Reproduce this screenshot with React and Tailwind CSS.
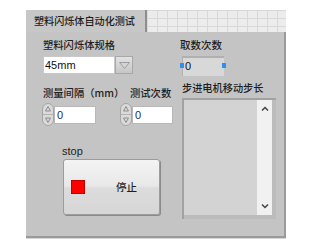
import React from "react";

const cjk = { fontFamily: '"Noto Sans CJK SC", "Noto Sans", sans-serif' };
const latin = { fontFamily: '"Liberation Sans", Arial, sans-serif' };

const Spinner = () => (
  <svg width="12" height="23" viewBox="0 0 12 23">
    <rect x="0.5" y="0.5" width="11" height="22" rx="5.5" fill="#dadada" stroke="#a4a4a4" />
    <line x1="1" y1="11.5" x2="11" y2="11.5" stroke="#b4b4b4" />
    <path d="M3.5 8 L6 3.5 L8.5 8 Z" fill="none" stroke="#8c8c8c" />
    <path d="M3.5 15 L6 19.5 L8.5 15 Z" fill="none" stroke="#8c8c8c" />
  </svg>
);

const Numeric = ({ width }) => (
  <div className="flex items-center">
    <Spinner />
    <div
      className={`${width} h-[18px] bg-white border border-[#b8b8b8] text-[11px] leading-[16px] pl-[2px] text-[#1c2b5a]`}
      style={latin}
    >
      0
    </div>
  </div>
);

export default function App() {
  return (
    <div className="w-[316px] h-[249px] bg-white pt-[10px] pl-[26px] text-[#1e1e1e]" style={cjk}>
      <div className="w-[260px]">
        <div className="flex h-[22px]">
          <div className="w-[121px] bg-[#c7c7c7] border-r-[2px] border-[#8e8e8e] pl-[8px] text-[10.1px] leading-[22px] whitespace-nowrap font-medium">
            塑料闪烁体自动化测试
          </div>
          <div className="flex-1 bg-[#ececec] bg-[linear-gradient(to_right,#d8d8d8_1px,transparent_1px),linear-gradient(to_bottom,#d8d8d8_1px,transparent_1px)] bg-[size:10px_8px]"></div>
        </div>
        <div className="h-[206px] bg-[#c4c4c4] border-r-[2px] border-b-[2px] border-[#9a9a9a] flex pl-[17px] font-medium">
          <div className="w-[137px] flex flex-col">
            <div className="mt-[6px] text-[10.3px] leading-[14px]">塑料闪烁体规格</div>
            <div className="mt-[4px] flex h-[18px] w-[90px]">
              <div className="flex-1 bg-white border border-[#c8c8c8] text-[11px] leading-[16px] pl-[1px] text-[#111] font-normal" style={latin}>
                45mm
              </div>
              <div className="w-[18px] bg-gradient-to-b from-[#e2e2e2] to-[#c6c6c6] border border-[#a8a8a8] flex items-center justify-center">
                <svg width="11" height="7" viewBox="0 0 11 7">
                  <path d="M0.5 0.5 L10.5 0.5 L5.5 6.5 Z" fill="#d4d4d4" stroke="#9e9e9e" />
                </svg>
              </div>
            </div>
            <div className="mt-[12px] flex text-[10.3px] leading-[14px] whitespace-nowrap">
              <div className="w-[87px]">测量间隔（mm）</div>
              <div>测试次数</div>
            </div>
            <div className="mt-[3px] flex font-normal">
              <div className="w-[78px] -ml-[1px]">
                <Numeric width="w-[42px]" />
              </div>
              <Numeric width="w-[41px]" />
            </div>
            <div className="mt-[18px] ml-[19px] text-[11px] leading-[14px] text-[#1e1e1e] font-normal" style={latin}>
              stop
            </div>
            <div className="mt-[1px] ml-[20px] w-[97px] h-[56px] rounded-[3px] border border-[#9c9c9c] shadow-[1px_1px_0_#8a8a8a] bg-[linear-gradient(to_bottom,#f4f4f4_0%,#e8e8e8_48%,#dcdcdc_52%,#d6d6d6_100%)] flex items-center pl-[7px]">
              <div className="w-[14px] h-[14px] bg-[#ff0000] border border-[#c00000]"></div>
              <div className="ml-[31px] text-[10.5px] leading-[14px] text-[#1e1e1e]">停止</div>
            </div>
          </div>
          <div className="flex flex-col">
            <div className="mt-[6px] text-[10.5px] leading-[14px]">取数次数</div>
            <div className="mt-[4px] flex items-center w-[46px] h-[20px] relative">
              <div className="w-[4px] h-[5px] bg-[#2f8ff0] absolute left-0 top-[7px]"></div>
              <div className="ml-[2px] w-[42px] h-[20px] bg-[#d8d8d8] border-t-2 border-l border-[#b0b0b0] text-[11px] leading-[17px] pl-[2px] text-[#111] font-normal" style={latin}>
                0
              </div>
              <div className="w-[4px] h-[5px] bg-[#2f8ff0] absolute right-0 top-[7px]"></div>
            </div>
            <div className="mt-[5px] ml-[2px] text-[10.2px] leading-[14px] whitespace-nowrap">步进电机移动步长</div>
            <div className="mt-[3px] ml-[2px] w-[94px] h-[121px] border-l-[2px] border-t-[2px] border-[#a2a2a2] flex">
              <div className="flex-1 flex border-r-[4px] border-b-[4px] border-[#bcbcbc]">
                <div className="flex-1 bg-[#d3d3d3]"></div>
                <div className="w-[15px] bg-[#f1f1f1] flex flex-col items-center justify-between py-[6px]">
                  <svg width="8" height="5" viewBox="0 0 8 5">
                    <path d="M1 4.5 L4 1.5 L7 4.5" fill="none" stroke="#444" strokeWidth="1.5" />
                  </svg>
                  <svg width="8" height="5" viewBox="0 0 8 5">
                    <path d="M1 0.5 L4 3.5 L7 0.5" fill="none" stroke="#444" strokeWidth="1.5" />
                  </svg>
                </div>
              </div>
            </div>
          </div>
        </div>
        <div className="h-[1px] bg-[#d6d6d6]"></div>
      </div>
    </div>
  );
}
